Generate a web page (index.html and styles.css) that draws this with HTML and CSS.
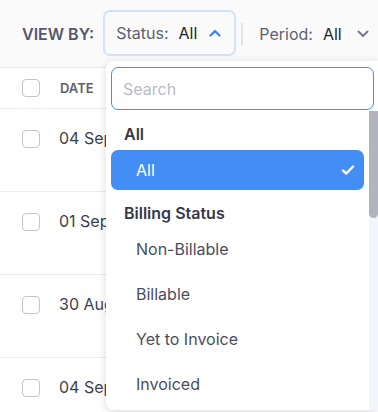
FILE: index.html
```html
<html>
<head>
	<title>Timesheet</title>
	<link rel="stylesheet" href="styles.css">
</head>
<body>

	<div class="toolbar">
		<span class="view_by">VIEW BY:</span>
		<div class="filter filter_open">
			<span class="filter_label">Status:</span>
			<span class="filter_value">All</span>
			<svg class="chevron chevron_up" width="12" height="8" viewBox="0 0 12 8"><path d="M1.5 6.5 L6 2 L10.5 6.5" fill="none" stroke="#3b82f6" stroke-width="2.2" stroke-linecap="round" stroke-linejoin="round"/></svg>
		</div>
		<div class="divider"></div>
		<div class="filter">
			<span class="filter_label">Period:</span>
			<span class="filter_value">All</span>
			<svg class="chevron" width="12" height="8" viewBox="0 0 12 8"><path d="M1.5 1.5 L6 6 L10.5 1.5" fill="none" stroke="#777a88" stroke-width="2" stroke-linecap="round" stroke-linejoin="round"/></svg>
		</div>
	</div>

	<div class="table">
		<div class="head_row">
			<span class="check"></span>
			<span class="col_title">DATE</span>
		</div>
		<div class="row"><span class="check"></span><span class="cell">04 Sep</span></div>
		<div class="row"><span class="check"></span><span class="cell">01 Sep</span></div>
		<div class="row"><span class="check"></span><span class="cell">30 Aug</span></div>
		<div class="row"><span class="check"></span><span class="cell">04 Sep</span></div>
	</div>

	<div class="dropdown">
		<div class="search_box">
			<input class="search" type="text" placeholder="Search">
		</div>
		<div class="list_wrap">
			<div class="list">
				<div class="group">All</div>
				<div class="option selected">
					<span>All</span>
					<svg width="14" height="12" viewBox="0 0 14 12"><path d="M2 6.5 L5.3 9.5 L12 2.5" fill="none" stroke="#fff" stroke-width="2.4" stroke-linecap="round" stroke-linejoin="round"/></svg>
				</div>
				<div class="group group_next">Billing Status</div>
				<div class="option">Non-Billable</div>
				<div class="option">Billable</div>
				<div class="option">Yet to Invoice</div>
				<div class="option">Invoiced</div>
			</div>
			<div class="scrollbar"><div class="thumb"></div></div>
		</div>
	</div>

</body>
</html>
```

FILE: styles.css
```css
html {
	font-family: Inter, "Noto Sans", Arial, sans-serif;
}
body {
	margin: 0;
	background-color: #fff;
	overflow: hidden;
	height: 412px;
}
.toolbar {
	height: 67px;
	display: flex;
	align-items: center;
	padding-left: 22px;
	background-color: #fafafb;
	border-bottom: 1px solid #e9e9ef;
	white-space: nowrap;
	overflow: hidden;
}
.toolbar > * {
	flex-shrink: 0;
}
.view_by {
	font-size: 16px;
	font-weight: 600;
	color: #555868;
	margin-right: 9px;
}
.filter {
	display: flex;
	align-items: center;
	height: 42px;
	padding: 0 11px;
	font-size: 16px;
	border: 2px solid transparent;
	border-radius: 7px;
}
.filter_open {
	border-color: #d3e2fb;
	padding: 0 13px 0 11px;
	margin-top: -2px;
}
.filter_label {
	color: #5e6172;
}
.filter_value {
	color: #1d1e2e;
	margin-left: 10px;
}
.chevron {
	margin-left: 15px;
}
.chevron_up {
	margin-left: 12px;
}
.divider {
	width: 2px;
	height: 22px;
	background-color: #e2e2e9;
	margin: 0 3px 0 5px;
}
.head_row {
	height: 40px;
	display: flex;
	align-items: center;
	padding-left: 22px;
	border-bottom: 1px solid #ebebf1;
}
.check {
	display: inline-block;
	width: 16px;
	height: 16px;
	border: 1px solid #c4c5cc;
	border-radius: 4px;
	background-color: #fff;
	flex-shrink: 0;
}
.col_title {
	margin-left: 20px;
	font-size: 13px;
	font-weight: 600;
	color: #5e6172;
}
.row {
	height: 83px;
	display: flex;
	align-items: flex-start;
	padding-left: 22px;
	border-bottom: 1px solid #ebebf1;
	box-sizing: border-box;
}
.row .check {
	margin-top: 21px;
}
.cell {
	margin-left: 19px;
	margin-top: 19px;
	font-size: 16px;
	color: #3d3f4d;
}
.dropdown {
	position: absolute;
	left: 106px;
	top: 61px;
	width: 272px;
	height: 349px;
	background-color: #fff;
	border-radius: 8px 0 0 8px;
	box-shadow: 0 2px 10px rgba(40, 40, 70, 0.16);
	display: flex;
	flex-direction: column;
	overflow: hidden;
}
.search_box {
	padding: 6px 4px 0 5px;
}
.search {
	width: 100%;
	height: 43px;
	box-sizing: border-box;
	border: 1px solid #4a8cf0;
	border-radius: 7px;
	padding: 0 11px;
	font-family: Inter, "Noto Sans", Arial, sans-serif;
	font-size: 16px;
	outline: none;
}
.search::placeholder {
	color: #babbc4;
}
.list_wrap {
	flex: 1;
	display: flex;
	min-height: 0;
}
.list {
	flex: 1;
	padding: 0 5px 0 5px;
}
.group {
	font-size: 16px;
	font-weight: 600;
	color: #363849;
	line-height: 18px;
	padding: 15px 13px 7px 13px;
}
.group_next {
	padding-top: 14px;
	padding-bottom: 4px;
}
.option {
	height: 45px;
	display: flex;
	align-items: center;
	justify-content: space-between;
	padding: 0 13px 0 25px;
	font-size: 16px;
	color: #4a4d62;
}
.option.selected {
	height: 40px;
	background-color: #428ef5;
	color: #fff;
	border-radius: 7px;
	padding-right: 9px;
}
.scrollbar {
	width: 9px;
	background-color: #f4f5fb;
	margin-top: 1px;
}
.thumb {
	height: 107px;
	background-color: #b3b2bf;
	border-radius: 0 0 5px 5px;
}
```
